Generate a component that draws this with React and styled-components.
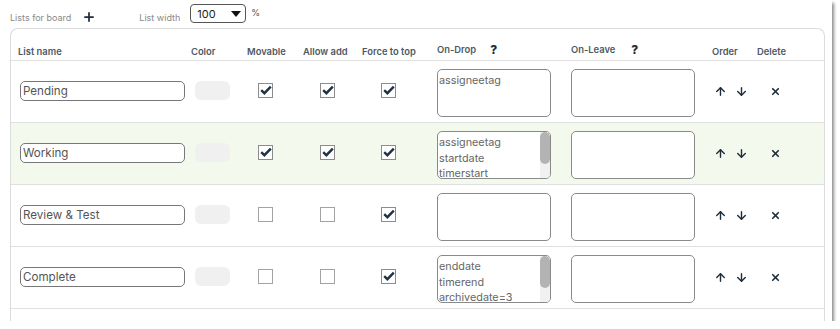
import React from "react";
import styled, { createGlobalStyle } from "styled-components";
import { Plus, ArrowUp, ArrowDown, X } from "lucide-react";

const GlobalStyle = createGlobalStyle`
  body {
    margin: 0;
    background: #fff;
    font-family: Inter, "Noto Sans", sans-serif;
  }
`;

const Frame = styled.div`
  width: 832px;
  height: 321px;
  overflow: hidden;
  background: #fff;
  box-shadow: 2px 3px 3px rgba(0, 0, 0, 0.45);
`;

const TopBar = styled.div`
  display: flex;
  align-items: center;
  height: 28px;
  padding-left: 10px;
`;

const Muted = styled.span`
  font-size: 9px;
  color: #8a8a8a;
  margin-top: ${(p) => p.$drop || 0}px;
  margin-left: ${(p) => p.$left || 0}px;
`;

const IconBtn = styled.span`
  display: inline-flex;
  color: #1f2d3a;
  margin-left: ${(p) => p.$left || 0}px;
  margin-top: ${(p) => p.$drop || 0}px;
`;

const Select = styled.div`
  display: flex;
  align-items: center;
  justify-content: space-between;
  box-sizing: border-box;
  width: 56px;
  height: 19px;
  margin-left: 10px;
  margin-top: -1px;
  padding: 0 4px 0 6px;
  border: 1px solid #555;
  border-radius: 4px;
  font-size: 11px;
  color: #222;
`;

const Caret = styled.span`
  width: 0;
  height: 0;
  border-left: 5px solid transparent;
  border-right: 5px solid transparent;
  border-top: 6px solid #111;
`;

const Percent = styled.span`
  font-size: 9px;
  color: #555;
  margin-left: 5px;
  margin-top: -4px;
`;

const Panel = styled.div`
  margin-left: 10px;
  width: 815px;
  box-sizing: border-box;
  height: 300px;
  border: 1px solid #dcdcdc;
  border-bottom: none;
  border-radius: 8px 8px 0 0;
`;

const cols = "180px 56px 56px 59px 75px 134px 141px 45px 1fr";

const HeadRow = styled.div`
  display: grid;
  grid-template-columns: ${cols};
  align-items: end;
  height: 32px;
  padding-bottom: 3px;
  box-sizing: border-box;
  border-bottom: 1px solid #e0e0e0;
`;

const Head = styled.div`
  display: flex;
  align-items: center;
  padding-left: ${(p) => p.$indent || 0}px;
  font-size: 9.4px;
  font-weight: 600;
  color: #4d5964;
  white-space: nowrap;
`;

const Help = styled.span`
  font-size: 12px;
  font-weight: 800;
  color: #1f2d3a;
  margin-left: ${(p) => p.$gap}px;
`;

const Row = styled.div`
  display: grid;
  grid-template-columns: ${cols};
  align-items: center;
  height: 62px;
  box-sizing: border-box;
  border-bottom: 1px solid #e0e0e0;
  background: ${(p) => (p.$active ? "#f3f9ec" : "#fff")};
`;

const Cell = styled.div`
  display: flex;
  align-items: center;
  padding-left: ${(p) => p.$indent || 0}px;
`;

const NameInput = styled.input`
  box-sizing: border-box;
  width: 165px;
  height: 20px;
  margin-top: -2px;
  padding: 0 2px;
  border: 1px solid #777;
  border-radius: 5px;
  font-family: Inter, "Noto Sans", sans-serif;
  font-size: 11.6px;
  color: #555;
  background: #fff;
  outline: none;
`;

const Swatch = styled.div`
  width: 35px;
  height: 19px;
  margin-top: -2px;
  border-radius: 6px;
  background: #f0f0f0;
`;

const Box = styled.span`
  display: inline-flex;
  align-items: center;
  justify-content: center;
  box-sizing: border-box;
  width: 15px;
  height: 15px;
  margin-top: -3px;
  border: 1px solid ${(p) => (p.$on ? "#8c8c8c" : "#a3a3a3")};
  background: #fff;
`;

const MemoBox = styled.div`
  display: flex;
  box-sizing: border-box;
  width: ${(p) => p.$w}px;
  height: 48px;
  margin-top: 3px;
  border: 1px solid #8a8a8a;
  border-radius: 5px;
  overflow: hidden;
  background: #fff;
`;

const MemoText = styled.textarea`
  flex: 1;
  min-width: 0;
  margin: 0;
  padding: 3px 1px 0;
  border: none;
  resize: none;
  overflow: hidden;
  font-family: Inter, "Noto Sans", sans-serif;
  font-size: 10.8px;
  line-height: 15.5px;
  color: #666;
  background: transparent;
  outline: none;
`;

const Track = styled.div`
  display: flex;
  flex-direction: column;
  width: 10px;
  background: #f1f1f1;
`;

const Thumb = styled.div`
  height: 32px;
  border-radius: 5px;
  background: #b3b3b3;
`;

const Order = styled.div`
  display: flex;
  gap: 8px;
  color: #1f2d3a;
  padding-left: 2px;
`;

const Check = ({ on }) => (
  <Box $on={on}>
    {on && (
      <svg width="12" height="10" viewBox="0 0 12 10">
        <path d="M1.2 5.2 L4.4 8.2 L10.8 1.6" fill="none" stroke="#1f3344" strokeWidth="2.4" />
      </svg>
    )}
  </Box>
);

const Memo = ({ w, value, scroll }) => (
  <MemoBox $w={w}>
    <MemoText defaultValue={value} />
    {scroll && (
      <Track>
        <Thumb />
      </Track>
    )}
  </MemoBox>
);

const lists = [
  { name: "Pending", movable: true, add: true, top: true, drop: "assigneetag" },
  { name: "Working", movable: true, add: true, top: true, drop: "assigneetag\nstartdate\ntimerstart\nuntag", active: true },
  { name: "Review & Test", movable: false, add: false, top: true, drop: "" },
  { name: "Complete", movable: false, add: false, top: true, drop: "enddate\ntimerend\narchivedate=3\nuntag" },
];

export default function App() {
  return (
    <Frame>
      <GlobalStyle />
      <TopBar>
        <Muted $drop={6}>Lists for board</Muted>
        <IconBtn $left={11} $drop={6}>
          <Plus size={14} strokeWidth={3} />
        </IconBtn>
        <Muted $left={43} $drop={6}>List width</Muted>
        <Select>
          100
          <Caret />
        </Select>
        <Percent>%</Percent>
      </TopBar>
      <Panel>
        <HeadRow>
          <Head $indent={7}>List name</Head>
          <Head>Color</Head>
          <Head>Movable</Head>
          <Head>Allow add</Head>
          <Head>Force to top</Head>
          <Head>
            On-Drop<Help $gap={14}>?</Help>
          </Head>
          <Head>
            On-Leave<Help $gap={16}>?</Help>
          </Head>
          <Head>Order</Head>
          <Head>Delete</Head>
        </HeadRow>
        {lists.map((l) => (
          <Row key={l.name} $active={l.active}>
            <Cell $indent={9}>
              <NameInput defaultValue={l.name} />
            </Cell>
            <Cell $indent={4}>
              <Swatch />
            </Cell>
            <Cell $indent={11}>
              <Check on={l.movable} />
            </Cell>
            <Cell $indent={17}>
              <Check on={l.add} />
            </Cell>
            <Cell $indent={19}>
              <Check on={l.top} />
            </Cell>
            <Cell>
              <Memo w={114} value={l.drop} scroll={l.drop.split("\n").length > 3} />
            </Cell>
            <Cell>
              <Memo w={124} value="" />
            </Cell>
            <Cell>
              <Order>
                <ArrowUp size={13} strokeWidth={2.6} />
                <ArrowDown size={13} strokeWidth={2.6} />
              </Order>
            </Cell>
            <Cell $indent={13}>
              <X size={11} strokeWidth={3.6} color="#1f2d3a" />
            </Cell>
          </Row>
        ))}
      </Panel>
    </Frame>
  );
}
